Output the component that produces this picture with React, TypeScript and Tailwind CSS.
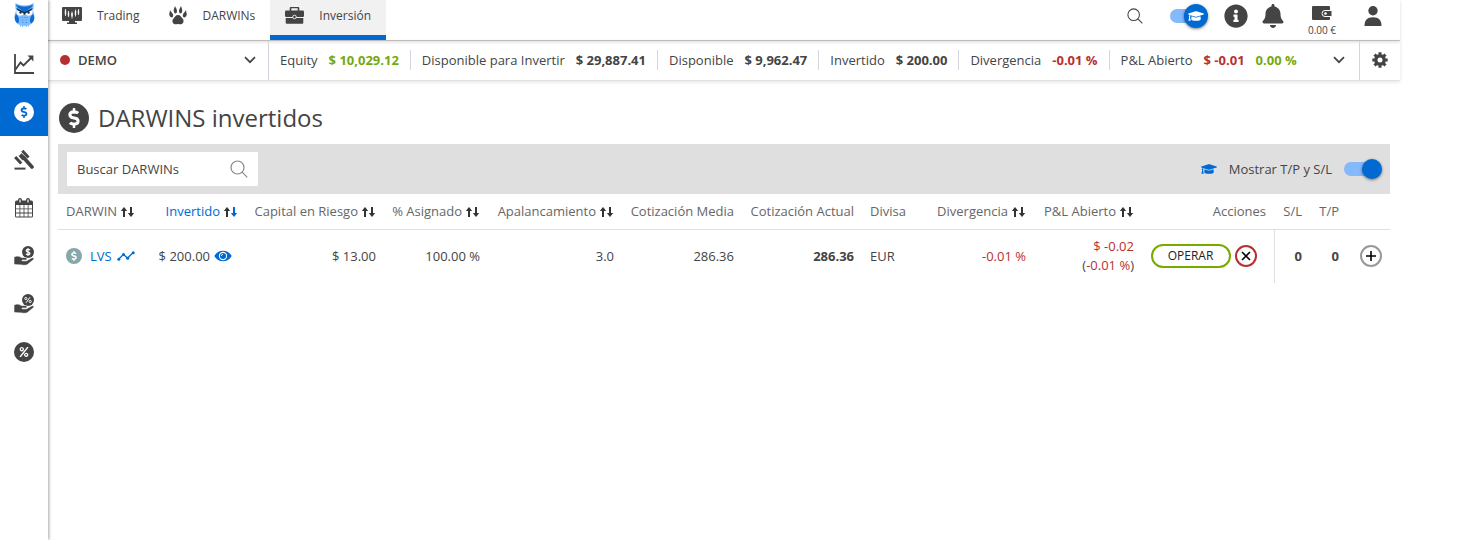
import React, { useState } from "react";
import { FaBell, FaDollarSign, FaGraduationCap, FaInfoCircle, FaPercent } from "react-icons/fa";

function OwlLogo() {
  return (
    <svg viewBox="0 0 42 48" className="h-6 w-[21px]" aria-hidden="true">
      <path d="M3 0 C8 3 12 5 21 5 C30 5 34 3 39 0 C40 6 39 11 38 16 C43 26 42 38 33 43 L21 46 L9 43 C0 38 -1 26 4 16 C3 11 2 6 3 0Z" fill="#7fbcff" />
      <path d="M4 3 C10 6 15 7 21 7 C27 7 32 6 38 3 C37 8 34 10 30 12 L21 19 L12 12 C8 10 5 8 4 3Z" fill="#0f6bd0" />
      <path d="M4 22 C0 29 1 37 8 41 C11 37 11 30 7 25Z M38 22 C42 29 41 37 34 41 C31 37 31 30 35 25Z" fill="#0f6bd0" />
      <path d="M5 12 L20 20 C18 27 7 27 5 20Z M37 12 L22 20 C24 27 35 27 37 20Z" fill="#fff" />
      <path d="M5 10 L21 18 L37 10 L36 14 L24 20 L21 24 L18 20 L6 14Z" fill="#12304f" />
      <circle cx="13" cy="19" r="2.4" fill="#12304f" />
      <circle cx="29" cy="19" r="2.4" fill="#12304f" />
      <path d="M15 29h3M20 29h3M25 29h3M16 34h3M23 34h3M16 39h3M23 39h3" stroke="#4b9af0" strokeWidth="2" />
      <path d="M13 43v4M17 44v4M25 44v4M29 43v4" stroke="#7fbcff" strokeWidth="2.5" />
    </svg>
  );
}

function ChartIcon() {
  return (
    <svg viewBox="0 0 20 20" className="size-5" fill="none" stroke="currentColor" strokeWidth="1.8" aria-hidden="true">
      <path d="M1 0v19h19" />
      <path d="M1.5 15.5 L6.5 8.5 L9.5 11.5 L18 3" />
      <path d="M13.5 1.5 H19.4 V7.5Z" fill="currentColor" stroke="none" />
    </svg>
  );
}

function GavelIcon() {
  return (
    <svg viewBox="0 0 20 20" className="size-5" fill="none" stroke="currentColor" aria-hidden="true">
      <path d="M9.500 7.500 L18 17" strokeWidth="3.600" strokeLinecap="round" />
      <path d="M8.300 0.800 L14.500 7.500" strokeWidth="3" />
      <path d="M1.200 7 L7.200 13.500" strokeWidth="3" />
      <path d="M4.600 6 L8.600 10.500 L11.800 7.700 L7.700 3.200Z" fill="currentColor" stroke="none" />
      <path d="M0.500 18.600h11" strokeWidth="2" />
    </svg>
  );
}

function CalendarIcon() {
  return (
    <svg viewBox="0 0 20 20" className="size-5" aria-hidden="true">
      <rect x="1" y="2.5" width="18" height="17" rx="1.5" fill="currentColor" />
      <rect x="4" y="0" width="4" height="6" rx="2" fill="currentColor" />
      <rect x="12" y="0" width="4" height="6" rx="2" fill="currentColor" />
      <path d="M6 1.5v3M14 1.5v3" stroke="#fff" strokeWidth="1.2" />
      <path
        d="M2 7h3.500v3.400H2z M6.300 7h3.300v3.400H6.300z M10.400 7h3.300v3.400h-3.300z M14.500 7H18v3.400h-3.500z M2 11.200h3.500v3.400H2z M6.300 11.200h3.300v3.400H6.300z M10.400 11.200h3.300v3.400h-3.300z M14.500 11.200H18v3.400h-3.500z M2 15.400h3.500v3.200H2z M6.300 15.400h3.300v3.200H6.300z M10.400 15.400h3.300v3.200h-3.300z M14.500 15.400H18v3.200h-3.500z"
        fill="#fff"
      />
    </svg>
  );
}

function HandIcon({ percent = false }: { percent?: boolean }) {
  return (
    <svg viewBox="0 0 20 20" className="size-5" aria-hidden="true">
      <circle cx="14" cy="6" r="6" fill="currentColor" />
      {percent ? (
        <g stroke="#fff" fill="none" strokeWidth="1">
          <path d="M16 3.200 L12 8.800" />
          <circle cx="11.800" cy="4.500" r="1.100" />
          <circle cx="16.200" cy="7.500" r="1.100" />
        </g>
      ) : (
        <path d="M16 4.300 C15.300 3 12.200 3 12.200 4.700 C12.200 6.500 16 5.600 16 7.500 C16 9.200 12.700 9.100 12 7.700 M14 2v8" stroke="#fff" strokeWidth="1.200" fill="none" />
      )}
      <path
        d="M0 11 C3 9.500 5 10 7.500 11.500 H11.500 C13.500 11.500 13.500 14 11.500 14 H8 V14.800 H12.500 L17.500 12 C19.500 11 20.800 12.800 19 14 L13.500 18.500 C12 19.600 10 19.300 8 19 L0 18.500Z"
        fill="currentColor"
        stroke="#fff"
        strokeWidth="0.6"
      />
    </svg>
  );
}

function CoinIcon({ className, children }: { className: string; children: React.ReactNode }) {
  return <span className={`flex shrink-0 items-center justify-center rounded-full ${className}`}>{children}</span>;
}

function MonitorIcon() {
  return (
    <svg viewBox="0 0 20 17" className="h-[17px] w-5" aria-hidden="true">
      <path d="M1 0h18a1 1 0 0 1 1 1v12a1 1 0 0 1-1 1h-6v1.500h2V17H5v-1.500h2V14H1a1 1 0 0 1-1-1V1a1 1 0 0 1 1-1Z" fill="currentColor" />
      <path d="M3.500 2v7M6.500 4v6M10 4.500v7M13.500 2.500v7M16.500 2v6" stroke="#fff" strokeWidth="0.8" />
      <path d="M2.800 3.500h1.400v4H2.800z M5.800 5.500h1.400v3H5.800z M9.300 6h1.400v3.500H9.300z M12.800 4h1.400v4h-1.400z M15.800 3.500h1.400v3h-1.400z" fill="#fff" />
    </svg>
  );
}

function PawIcon() {
  return (
    <svg viewBox="0 0 18 19" className="h-[19px] w-[18px]" fill="currentColor" aria-hidden="true">
      <path d="M9 9 C11.500 9 12 11 13.500 12.500 C15.500 14.500 14.500 18 12 18.300 C10.500 18.500 10 18 9 18 C8 18 7.500 18.500 6 18.300 C3.500 18 2.500 14.500 4.500 12.500 C6 11 6.500 9 9 9Z" />
      <path d="M6 0 C6.500 1.500 8.300 3.500 8 5.500 C7.800 8 5.300 8 4.800 5.500 C4.400 3.500 5.500 1.800 6 0Z M12 0 C11.500 1.500 9.700 3.500 10 5.500 C10.200 8 12.700 8 13.200 5.500 C13.600 3.500 12.500 1.800 12 0Z" />
      <path d="M1 4 C1.500 5.500 4.200 7 4.200 9.500 C4.200 12 1.500 12 0.500 9.500 C-0.200 7.500 1 6 1 4Z M17 4 C16.500 5.500 13.800 7 13.800 9.500 C13.800 12 16.500 12 17.500 9.500 C18.200 7.500 17 6 17 4Z" />
    </svg>
  );
}

function BriefcaseIcon() {
  return (
    <svg viewBox="0 0 19 17" className="h-[17px] w-[19px]" aria-hidden="true">
      <path d="M5.500 4V1.500 a1 1 0 0 1 1-1h6a1 1 0 0 1 1 1V4" fill="none" stroke="currentColor" strokeWidth="1.600" />
      <rect x="0" y="3.500" width="19" height="6.500" rx="1.200" fill="currentColor" />
      <path d="M0.700 11h17.600v4.800a1 1 0 0 1-1 1H1.700a1 1 0 0 1-1-1Z" fill="currentColor" />
      <circle cx="9.500" cy="10" r="1.800" fill="currentColor" stroke="#f1f1f1" strokeWidth="0.900" />
    </svg>
  );
}

function SearchIcon({ className }: { className: string }) {
  return (
    <svg viewBox="0 0 18 18" className={className} fill="none" stroke="currentColor" strokeWidth="1.200" aria-hidden="true">
      <circle cx="7.500" cy="7.500" r="6.500" />
      <path d="M12.200 12.200 L17.300 17.300" />
    </svg>
  );
}

function WalletIcon() {
  return (
    <svg viewBox="0 0 20 14" className="h-3.5 w-5" aria-hidden="true">
      <path d="M1 0h16a1 1 0 0 1 1 1v12a1 1 0 0 1-1 1H1a1 1 0 0 1-1-1V1a1 1 0 0 1 1-1Z" fill="currentColor" />
      <path d="M19.500 4.500h-6.500a3 3 0 0 0 0 6h6.500" fill="currentColor" stroke="#fff" strokeWidth="1" />
      <circle cx="13.500" cy="7.500" r="1.300" fill="#fff" />
    </svg>
  );
}

function UserIcon() {
  return (
    <svg viewBox="0 0 18 20" className="h-5 w-[18px]" fill="currentColor" aria-hidden="true">
      <circle cx="9" cy="4.700" r="4.700" />
      <path d="M0.500 20 C0.500 14.500 3 11.300 9 11.300 C15 11.300 17.500 14.500 17.500 20Z" />
    </svg>
  );
}

function GearIcon() {
  return (
    <svg viewBox="0 0 16 16" className="size-4" stroke="currentColor" fill="none" aria-hidden="true">
      <circle cx="8" cy="8" r="4.200" strokeWidth="3.400" />
      <path
        d="M8 0.300v2.500M8 13.200v2.500M0.300 8h2.500M13.200 8h2.500M2.500 2.500l1.900 1.900M11.600 11.600l1.900 1.900M2.500 13.500l1.900-1.900M11.600 4.400l1.900-1.900"
        strokeWidth="3"
      />
    </svg>
  );
}

function EyeIcon() {
  return (
    <svg viewBox="0 0 18 12" className="h-3 w-[18px] shrink-0" aria-hidden="true">
      <path d="M0.300 6 C4 -1 14 -1 17.700 6 C14 13 4 13 0.300 6Z" fill="#0069d2" />
      <circle cx="9" cy="6" r="3.600" fill="none" stroke="#fff" strokeWidth="1.100" />
      <path d="M7.300 6 A1.700 1.700 0 0 1 9 4.300" fill="none" stroke="#fff" strokeWidth="0.800" />
    </svg>
  );
}

function ChevronIcon() {
  return (
    <svg viewBox="0 0 12 8" className="h-2 w-3" fill="none" stroke="currentColor" strokeWidth="1.700" aria-hidden="true">
      <path d="M1 1.200 L6 6.200 L11 1.200" />
    </svg>
  );
}

function SortIcon({ active = false }: { active?: boolean }) {
  return (
    <svg viewBox="0 0 14 11" className="ml-1 inline-block h-[11px] w-3.5" strokeWidth="2" aria-hidden="true">
      <path d="M3 10V3" stroke="#333" />
      <path d="M3 0 L6.200 4 H-0.200Z" fill="#333" />
      <path d="M10 0V7" stroke={active ? "#0069d2" : "#333"} />
      <path d="M10 10 L13.200 6 H6.800Z" fill={active ? "#0069d2" : "#333"} />
    </svg>
  );
}

function SparkIcon() {
  return (
    <svg viewBox="0 0 18 10" className="h-2.5 w-[18px]" aria-hidden="true">
      <path d="M1.800 8 L6.500 3.500 L10.500 7 L16 1.800" fill="none" stroke="#0069d2" strokeWidth="1.300" />
      <g fill="#0069d2">
        <circle cx="1.800" cy="8.200" r="1.500" />
        <circle cx="6.500" cy="3.500" r="1.500" />
        <circle cx="10.700" cy="7.200" r="1.500" />
        <circle cx="16.200" cy="1.700" r="1.500" />
      </g>
    </svg>
  );
}

const sideItems = [
  { label: "Gráfico", icon: <ChartIcon /> },
  {
    label: "DARWINS invertidos",
    active: true,
    icon: (
      <CoinIcon className="size-5 bg-white text-[#0069d2]">
        <FaDollarSign className="size-3" />
      </CoinIcon>
    ),
  },
  { label: "Subastas", icon: <GavelIcon /> },
  { label: "Calendario", icon: <CalendarIcon /> },
  { label: "Comisiones", icon: <HandIcon /> },
  { label: "Porcentaje de comisiones", icon: <HandIcon percent /> },
  {
    label: "Porcentajes",
    icon: (
      <CoinIcon className="size-5 bg-[#444] text-white">
        <FaPercent className="size-2.5" />
      </CoinIcon>
    ),
  },
];

const tabs = [
  { label: "Trading", icon: <MonitorIcon /> },
  { label: "DARWINs", icon: <PawIcon /> },
  { label: "Inversión", icon: <BriefcaseIcon />, active: true },
];

const stats = [
  { label: "Equity", values: [{ text: "$ 10,029.12", color: "text-[#76a810]" }] },
  { label: "Disponible para Invertir", values: [{ text: "$ 29,887.41", color: "text-[#444]" }] },
  { label: "Disponible", values: [{ text: "$ 9,962.47", color: "text-[#444]" }] },
  { label: "Invertido", values: [{ text: "$ 200.00", color: "text-[#444]" }] },
  { label: "Divergencia", values: [{ text: "-0.01 %", color: "text-[#b73030]" }] },
  {
    label: "P&L Abierto",
    values: [
      { text: "$ -0.01", color: "text-[#b73030]" },
      { text: "0.00 %", color: "text-[#76a810]" },
    ],
  },
];

const columns = [
  { label: "DARWIN", width: "w-[90px]", align: "text-left", sort: true },
  { label: "Invertido", width: "w-[98px]", align: "text-right", sort: true, active: true },
  { label: "Capital en Riesgo", width: "w-[138px]", align: "text-right", sort: true },
  { label: "% Asignado", width: "w-[104px]", align: "text-right", sort: true },
  { label: "Apalancamiento", width: "w-[134px]", align: "text-right", sort: true },
  { label: "Cotización Media", width: "w-[120px]", align: "text-right" },
  { label: "Cotización Actual", width: "w-[120px]", align: "text-right" },
  { label: "Divisa", width: "w-[60px]", align: "text-left" },
  { label: "Divergencia", width: "w-[112px]", align: "text-right", sort: true },
  { label: "P&L Abierto", width: "w-[108px]", align: "text-right", sort: true },
  { label: "Acciones", width: "w-[132px]", align: "text-right" },
  { label: "S/L", width: "w-[36px]", align: "text-right" },
  { label: "T/P", width: "w-[37px]", align: "text-right" },
  { label: "", width: "w-[43px]", align: "text-right" },
];

export default function App() {
  const [guide, setGuide] = useState(true);
  const [limits, setLimits] = useState(true);

  return (
    <div className="flex min-h-screen bg-white pr-[79px] font-['Open_Sans',sans-serif] text-[13px] leading-5 text-[#444]">
      <nav className="relative z-10 w-12 shrink-0 bg-white shadow-[1px_0_3px_rgba(0,0,0,0.35)]">
        <a href="#inicio" aria-label="Inicio" className="flex h-10 justify-center pt-[3px] pl-px">
          <OwlLogo />
        </a>
        {sideItems.map((item) => (
          <a
            key={item.label}
            href="#seccion"
            aria-label={item.label}
            className={`flex h-12 items-center justify-center ${item.active ? "bg-[#0069d2]" : ""}`}
          >
            {item.icon}
          </a>
        ))}
      </nav>

      <div className="min-w-0 flex-1">
        <header className="flex justify-between border-b border-[#c4c4c4] shadow-[0_1px_3px_rgba(0,0,0,0.15)]">
          <div className="-ml-px flex">
            {tabs.map((tab) => (
              <a
                key={tab.label}
                href="#pestana"
                className={`flex h-10 items-center gap-[15px] border-b-[5px] px-[15px] pb-1 text-[12px] ${
                  tab.active ? "border-[#0069d2] bg-[#f1f1f1]" : "border-transparent"
                }`}
              >
                {tab.icon}
                {tab.label}
              </a>
            ))}
          </div>
          <div className="flex gap-3.5 pr-3.5">
            <button aria-label="Buscar" className="flex h-[31px] w-[42px] items-center justify-center">
              <SearchIcon className="size-4" />
            </button>
            <label className="relative flex h-8 w-10 items-center">
              <input
                type="checkbox"
                aria-label="Modo guía"
                checked={guide}
                onChange={(e) => setGuide(e.target.checked)}
                className="h-3.5 w-8 appearance-none rounded-full bg-[#84b9fb]"
              />
              <span className="absolute top-1 right-0.5 flex size-6 items-center justify-center rounded-full bg-[#0069d2] text-white shadow-[0_1px_3px_rgba(0,0,0,0.5)]">
                <FaGraduationCap className="size-4" />
              </span>
            </label>
            <button aria-label="Información" className="flex h-8 items-center">
              <FaInfoCircle className="size-6" />
            </button>
            <button aria-label="Notificaciones" className="flex h-8 items-center">
              <FaBell className="h-6 w-[22px]" />
            </button>
            <button className="flex w-12 flex-col items-center pt-1.5 text-[10px] leading-5">
              <WalletIcon />
              0.00 €
            </button>
            <button aria-label="Usuario" className="flex h-8 w-[26px] items-center justify-center">
              <UserIcon />
            </button>
          </div>
        </header>

        <section className="flex h-10 border-b border-[#e2e2e2] shadow-[0_1px_4px_rgba(0,0,0,0.12)]">
          <button className="flex w-[221px] shrink-0 items-center border-r border-[#d5d5e2] pr-3 pb-0.5 pl-3 font-semibold">
            <span className="mr-2 size-2.5 rounded-full bg-[#b73030]" />
            DEMO
            <span className="ml-auto">
              <ChevronIcon />
            </span>
          </button>
          <dl className="flex flex-1 items-center pb-0.5">
            {stats.map((stat) => (
              <div key={stat.label} className="flex gap-[11px] border-r border-[#d5d5e2] px-[11px] whitespace-nowrap last:border-r-0">
                <dt>{stat.label}</dt>
                {stat.values.map((value) => (
                  <dd key={value.text} className={`font-bold ${value.color}`}>
                    {value.text}
                  </dd>
                ))}
              </div>
            ))}
          </dl>
          <button aria-label="Más datos" className="flex w-10 items-center justify-center pb-0.5">
            <ChevronIcon />
          </button>
          <button aria-label="Configuración" className="flex w-[41px] items-center justify-center border-l border-[#d5d5e2] pb-0.5">
            <GearIcon />
          </button>
        </section>

        <main className="px-2.5">
          <h1 className="flex items-center gap-[9px] pt-[22px] pb-[11px] pl-px text-[24px] leading-[30px] font-normal">
            <CoinIcon className="size-[30px] bg-[#444] text-white">
              <FaDollarSign className="size-5" />
            </CoinIcon>
            DARWINS invertidos
          </h1>

          <div className="flex items-center justify-between bg-[#dfdfdf] p-2">
            <div className="relative ml-px">
              <input
                type="text"
                aria-label="Buscar DARWINs"
                placeholder="Buscar DARWINs"
                className="h-[34px] w-[191px] bg-white pr-9 pl-2.5 placeholder:text-[#444] placeholder:opacity-100"
              />
              <span className="pointer-events-none absolute top-2 right-2.5 text-[#888]">
                <SearchIcon className="size-[18px]" />
              </span>
            </div>
            <div className="flex items-center">
              <FaGraduationCap className="mr-3 size-4 text-[#0069d2]" />
              <label htmlFor="limits" className="mr-3">
                Mostrar T/P y S/L
              </label>
              <span className="relative flex h-5 w-[38px] items-center">
                <input
                  id="limits"
                  type="checkbox"
                  checked={limits}
                  onChange={(e) => setLimits(e.target.checked)}
                  className="h-3.5 w-[34px] appearance-none rounded-full bg-[#84b9fb]"
                />
                <span className="pointer-events-none absolute top-0 right-0 size-5 rounded-full bg-[#0069d2] shadow-[0_1px_3px_rgba(0,0,0,0.5)]" />
              </span>
            </div>
          </div>

          <table className="w-full table-fixed border-collapse">
            <thead>
              <tr className="h-[35px] border-b border-[#dfdfdf]">
                {columns.map((col) => (
                  <th
                    key={col.label}
                    className={`px-2 font-normal whitespace-nowrap ${col.width} ${col.align} ${col.active ? "text-[#0069d2]" : "text-[#666]"}`}
                  >
                    {col.label}
                    {col.sort && <SortIcon active={col.active} />}
                  </th>
                ))}
              </tr>
            </thead>
            <tbody>
              <tr className="h-[54px] text-right whitespace-nowrap">
                <td className="px-2">
                  <span className="flex items-center">
                    <CoinIcon className="mr-2 size-4 bg-[#86a8aa] text-white">
                      <FaDollarSign className="size-2.5" />
                    </CoinIcon>
                    <a href="#lvs" className="mr-[5px] text-[#0069d2]">
                      LVS
                    </a>
                    <SparkIcon />
                  </span>
                </td>
                <td className="pr-3.5">
                  <span className="flex items-center justify-end gap-1">
                    $ 200.00
                    <EyeIcon />
                  </span>
                </td>
                <td className="px-2">$ 13.00</td>
                <td className="px-2">100.00 %</td>
                <td className="px-2">3.0</td>
                <td className="px-2">286.36</td>
                <td className="px-2 font-bold">286.36</td>
                <td className="px-2 text-left">EUR</td>
                <td className="px-2 text-[#b73030]">-0.01 %</td>
                <td className="px-2 leading-[19px]">
                  <span className="text-[#b73030]">$ -0.02</span>
                  <br />
                  (<span className="text-[#b73030]">-0.01 %</span>)
                </td>
                <td className="px-2">
                  <span className="flex items-center justify-end gap-1 pr-[9px]">
                    <button className="h-6 w-20 rounded-full border-2 border-[#7aaa00] text-[12px] leading-5 text-[#222]">OPERAR</button>
                    <button aria-label="Cerrar" className="flex size-[22px] items-center justify-center rounded-full border-2 border-[#b73030]">
                      <svg viewBox="0 0 10 10" className="size-2.5" stroke="#000" strokeWidth="1.600" aria-hidden="true">
                        <path d="M1 1l8 8M9 1l-8 8" />
                      </svg>
                    </button>
                  </span>
                </td>
                <td className="border-l border-[#dfdfdf] px-2 font-bold">0</td>
                <td className="px-2 font-bold">0</td>
                <td className="px-2">
                  <span className="flex justify-end">
                    <button aria-label="Añadir" className="flex size-[22px] items-center justify-center rounded-full border-2 border-[#999]">
                      <svg viewBox="0 0 10 10" className="size-2.5" stroke="#000" strokeWidth="1.600" aria-hidden="true">
                        <path d="M5 0v10M0 5h10" />
                      </svg>
                    </button>
                  </span>
                </td>
              </tr>
            </tbody>
          </table>
        </main>
      </div>
    </div>
  );
}
